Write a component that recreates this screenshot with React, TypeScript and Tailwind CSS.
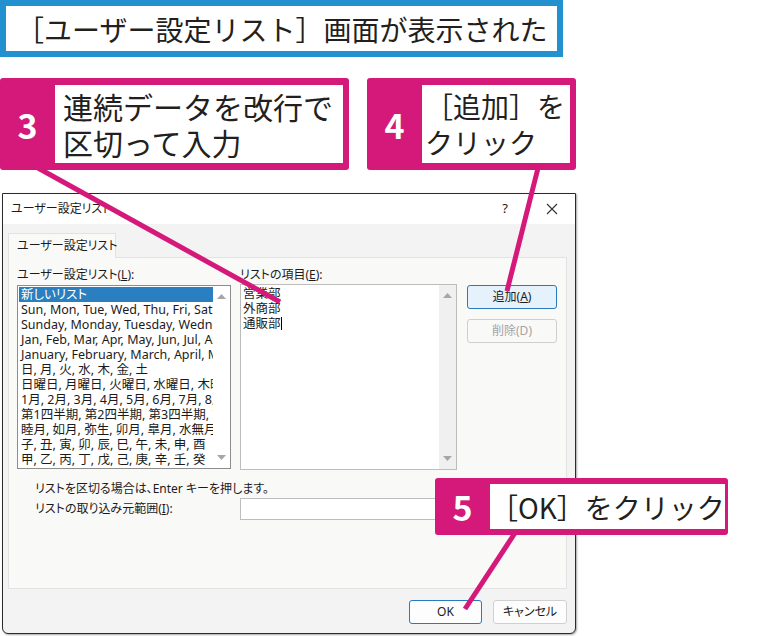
const MAGENTA = "bg-[#d4197b]";

const listRows = [
  "新しいリスト",
  "Sun, Mon, Tue, Wed, Thu, Fri, Sat",
  "Sunday, Monday, Tuesday, Wednesday",
  "Jan, Feb, Mar, Apr, May, Jun, Jul, Aug",
  "January, February, March, April, May",
  "日, 月, 火, 水, 木, 金, 土",
  "日曜日, 月曜日, 火曜日, 水曜日, 木曜日",
  "1月, 2月, 3月, 4月, 5月, 6月, 7月, 8月",
  "第1四半期, 第2四半期, 第3四半期, 第4四半期",
  "睦月, 如月, 弥生, 卯月, 皐月, 水無月",
  "子, 丑, 寅, 卯, 辰, 巳, 午, 未, 申, 酉",
  "甲, 乙, 丙, 丁, 戊, 己, 庚, 辛, 壬, 癸",
];

const Callout = ({
  num,
  lines,
  className,
  textClass,
}: {
  num: string;
  lines: string[];
  className: string;
  textClass: string;
}) => (
  <div className={`flex rounded-[3px] ${MAGENTA} pr-[6px] ${className}`}>
    <div className="flex w-[55px] shrink-0 items-center justify-center text-[34px] font-bold text-white">
      {num}
    </div>
    <div className={`flex flex-1 flex-col justify-center bg-white leading-[36px] text-[#231f20] ${textClass}`}>
      {lines.map((l) => (
        <div key={l} className="whitespace-nowrap">{l}</div>
      ))}
    </div>
  </div>
);

const ScrollBar = ({ grey }: { grey?: boolean }) => (
  <div className={`flex w-[17px] shrink-0 flex-col justify-between py-[6px] ${grey ? "bg-[#f0f0f0]" : "bg-white"}`}>
    <svg width="17" height="8" viewBox="0 0 17 8">
      <path d="M4 7 L8.5 2 L13 7 Z" fill="#a6a6a6" />
    </svg>
    <svg width="17" height="8" viewBox="0 0 17 8">
      <path d="M4 1 L8.5 6 L13 1 Z" fill="#a6a6a6" />
    </svg>
  </div>
);

const Dialog = () => (
  <div
    className="ml-[2px] mt-[23px] flex h-[441px] w-[574px] flex-col overflow-hidden rounded-b-[6px] border border-[#2b2b2b] bg-[#f3f3f3] text-[12px] text-[#1b1b1b] shadow-[1px_1px_2px_rgba(0,0,0,0.35)] [font-feature-settings:'palt']"
    style={{ fontFamily: '"Noto Sans", "Noto Sans CJK JP", sans-serif' }}
  >
    {/* title bar */}
    <div className="flex h-[30px] shrink-0 items-center bg-white pl-[8px]">
      <span>ユーザー設定リスト</span>
      <span className="ml-auto mr-[38px] text-[13px]">?</span>
      <svg width="12" height="12" viewBox="0 0 12 12" className="mr-[17px]">
        <path d="M1 1 L11 11 M11 1 L1 11" stroke="#333" strokeWidth="1.1" />
      </svg>
    </div>
    <div className="flex flex-1 flex-col px-[5px] pt-[9px]">
      {/* tab */}
      <div className="relative z-10 -mb-px flex h-[25px] w-[108px] items-center whitespace-nowrap border border-b-0 border-[#e2e2e2] bg-[#f9f9f8] pl-[8px]">
        ユーザー設定リスト
      </div>
      {/* panel */}
      <div className="flex h-[332px] w-[559px] flex-col border border-[#e2e2e2] bg-[#f9f9f8] px-[8px] pt-[8px]">
        <div className="flex gap-[9px]">
          <div className="flex w-[214px] flex-col">
            <div className="h-[19px]">
              ユーザー設定リスト(<span className="underline">L</span>):
            </div>
            <div className="flex h-[184px] border border-[#8d8d8d] bg-white">
              <div className="flex-1 overflow-hidden py-[1px] pl-[1px] text-[12.5px]">
                {listRows.map((r, i) => (
                  <div
                    key={r}
                    className={`h-[15px] overflow-hidden whitespace-nowrap pl-[2px] leading-[15px] ${i === 0 ? "bg-[#2a7fc1] text-white" : ""}`}
                  >
                    {r}
                  </div>
                ))}
              </div>
              <ScrollBar />
            </div>
          </div>
          <div className="flex w-[217px] flex-col">
            <div className="h-[18px]">
              リストの項目(<span className="underline">E</span>):
            </div>
            <div className="flex h-[186px] border border-[#bdbdbd] bg-white">
              <div className="flex-1 pl-[2px] pt-[1px] text-[12.5px] leading-[15px]">
                <div>営業部</div>
                <div>外商部</div>
                <div className="flex items-center">
                  通販部<span className="h-[13px] w-px bg-black" />
                </div>
              </div>
              <ScrollBar grey />
            </div>
          </div>
          <div className="flex flex-col gap-[10px] pl-[1px] pt-[19px]">
            <div className="flex h-[24px] w-[90px] items-center justify-center rounded-[3px] border border-[#2a7ac0] bg-[#e5f1fb]">
              追加(<span className="underline">A</span>)
            </div>
            <div className="flex h-[24px] w-[90px] items-center justify-center rounded-[3px] border border-[#cfcfcf] bg-[#f9f9f8] text-[#a3a3a3]">
              削除(D)
            </div>
          </div>
        </div>
        <div className="mt-[10px] pl-[18px] leading-[18px]">リストを区切る場合は、Enter キーを押します。</div>
        <div className="flex items-center">
          <div className="w-[223px] pl-[18px]">
            リストの取り込み元範囲(<span className="underline">I</span>):
          </div>
          <div className="h-[22px] w-[317px] border border-[#bdbdbd] bg-white" />
        </div>
      </div>
      {/* footer buttons */}
      <div className="flex justify-end gap-[11px] pr-[3px] pt-[11px]">
        <div className="flex h-[24px] w-[73px] items-center justify-center rounded-[3px] border border-[#2a7ac0] bg-[#fdfdfd]">
          OK
        </div>
        <div className="flex h-[24px] w-[74px] items-center justify-center rounded-[3px] border border-[#d0d0d0] bg-[#fdfdfd]">
          キャンセル
        </div>
      </div>
    </div>
  </div>
);

export default function App() {
  return (
    <div
      className="relative h-[636px] w-[783px] overflow-hidden bg-white"
      style={{ fontFamily: '"Noto Sans CJK JP", "Noto Sans", sans-serif' }}
    >
      <div className="flex h-[57px] w-[563px] items-center border-[6px] border-[#2391d0] pl-[10px] text-[28px] text-[#231f20]">
        ［ユーザー設定リスト］画面が表示された
      </div>
      <div className="mt-[21px] flex gap-[18px]">
        <Callout
          num="3"
          lines={["連続データを改行で", "区切って入力"]}
          className="h-[92px] w-[349px] py-[7px]"
          textClass="pl-[8px] text-[30px]"
        />
        <Callout
          num="4"
          lines={["［追加］を", "クリック"]}
          className="h-[92px] w-[209px] py-[7px]"
          textClass="pl-[3px] text-[28px]"
        />
      </div>
      <Dialog />

      {/* callout 5 sits over the dialog */}
      <div className="absolute left-[435px] top-[478px]">
        <Callout
          num="5"
          lines={["［OK］をクリック"]}
          className="h-[57px] w-[293px] py-[6px]"
          textClass="pl-0 text-[28px]"
        />
      </div>

      <svg className="pointer-events-none absolute inset-0" width="783" height="636">
        <g stroke="#d4197b" strokeWidth="5" strokeLinecap="butt">
          <line x1="38" y1="168" x2="280" y2="302" />
          <line x1="538" y1="168" x2="507" y2="291" />
          <line x1="515" y1="533" x2="465" y2="609" />
        </g>
      </svg>
    </div>
  );
}
